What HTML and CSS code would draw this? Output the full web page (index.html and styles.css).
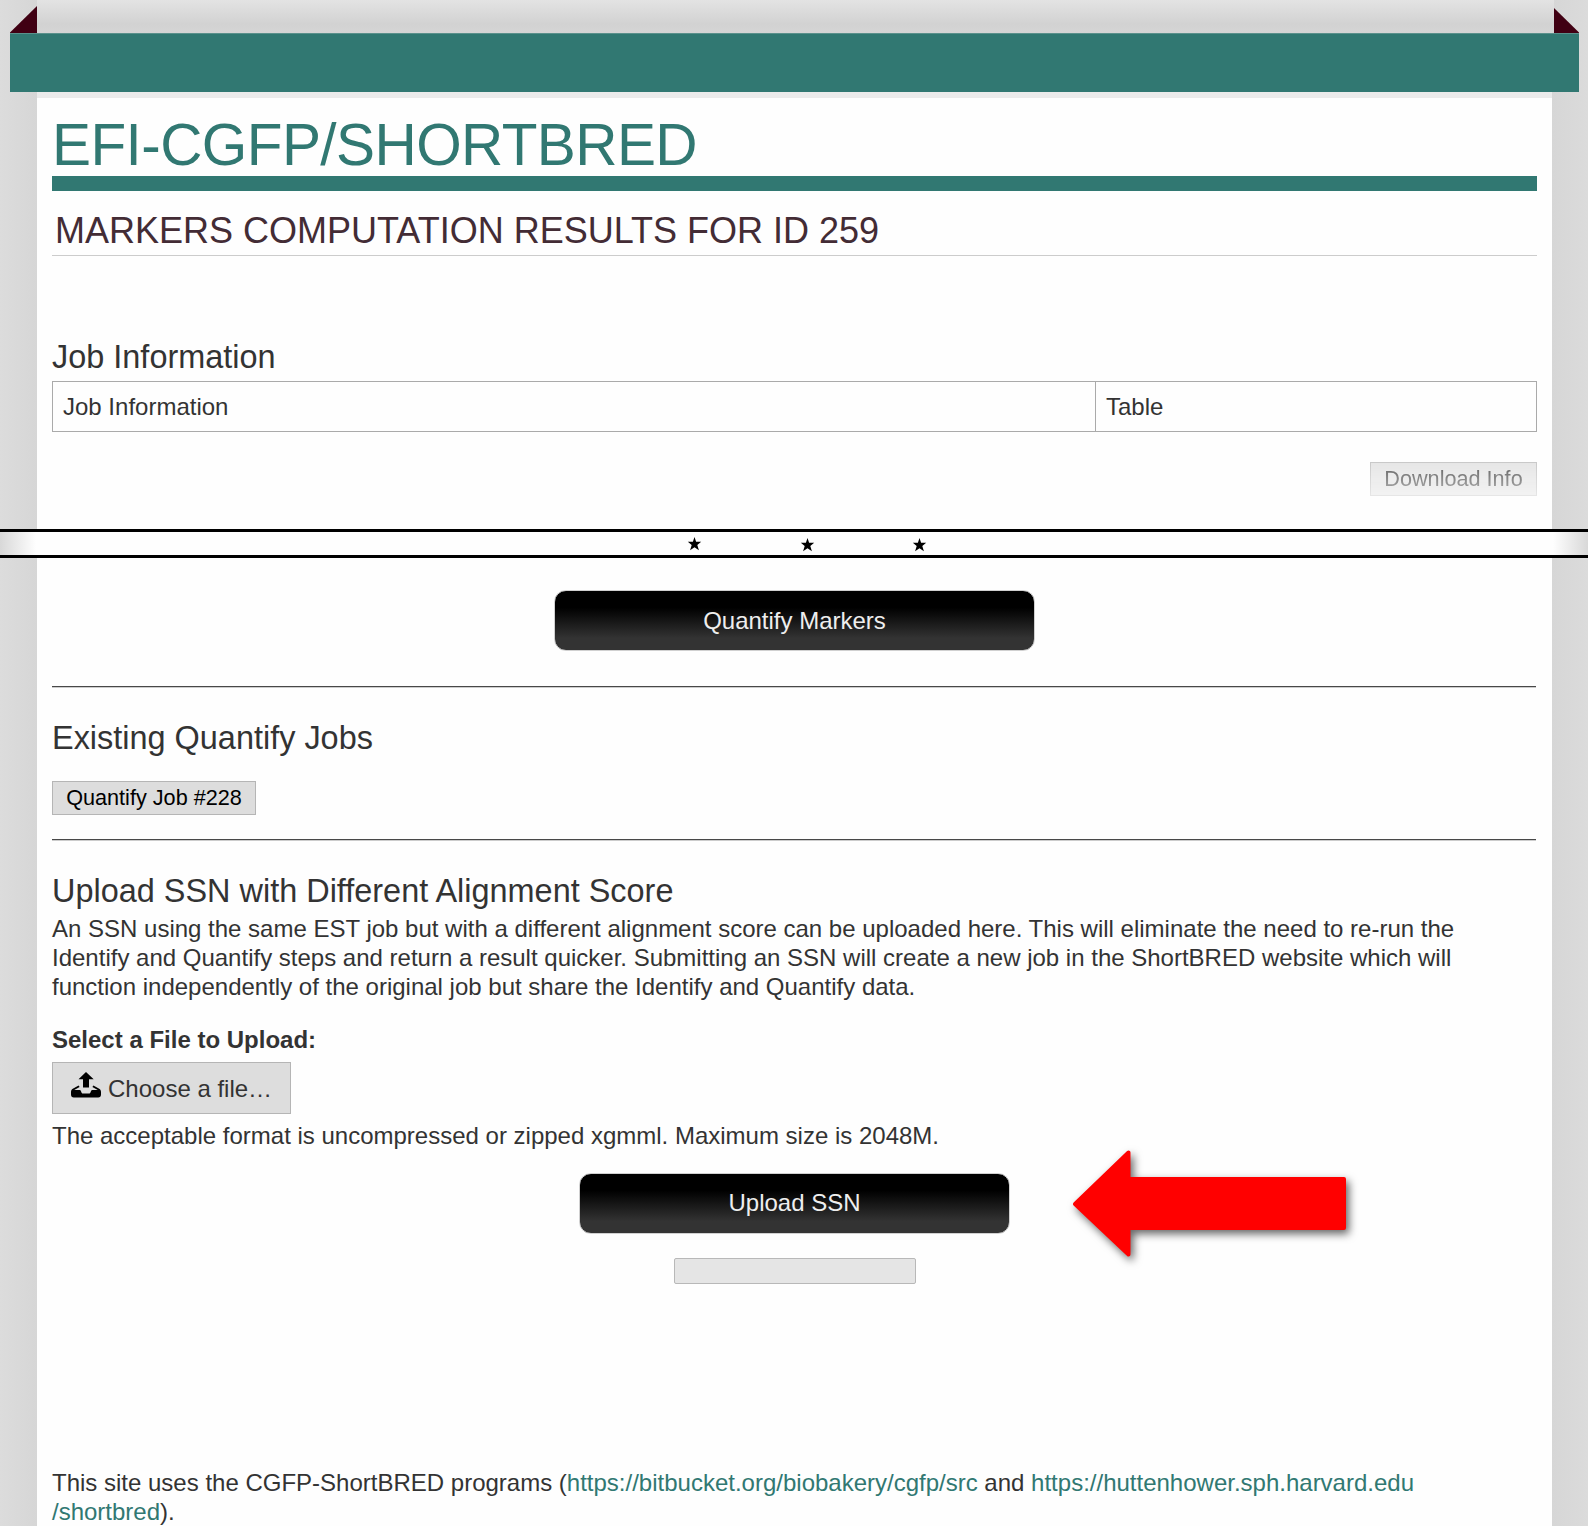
FILE: index.html
```html
<!DOCTYPE html>
<html lang="en">
<head>
<meta charset="utf-8">
<title>EFI-CGFP/ShortBRED</title>
<link rel="stylesheet" href="styles.css">
</head>
<body>
<div class="page">
  <header class="masthead">
    <div class="topstrip">
      <svg class="fold" width="27" height="27" viewBox="0 0 27 27"><path d="M27 0V27H0V26.500Z"/></svg>
      <div class="topshade"></div>
      <svg class="fold fold-right" width="25" height="25" viewBox="0 0 25 25"><path d="M0 0V25H25V24.500Z"/></svg>
    </div>
    <div class="band"></div>
    <div class="understrip"></div>
  </header>

  <section class="sheet sheet-job">
    <h1>EFI-CGFP/SHORTBRED</h1>
    <h2>MARKERS COMPUTATION RESULTS FOR ID 259</h2>
    <h3>Job Information</h3>
    <table class="info"><tbody><tr><td class="info-name">Job Information</td><td>Table</td></tr></tbody></table>
    <div class="download"><button class="mini faded" type="button">Download Info</button></div>
  </section>

  <div class="break">
    <svg class="stars" width="240" height="17" viewBox="0 0 240 17">
      <defs><path id="star" d="M0-7 1.6-2.200H6.700L2.800 1 4.400 6.200 0 3.300-4.400 6.200-2.800 1-6.700-2.200H-1.600Z"/></defs>
      <use href="#star" x="7.500" y="9"/><use href="#star" x="120.500" y="10"/><use href="#star" x="232.500" y="10"/>
    </svg>
  </div>

  <main class="sheet sheet-main">
    <button class="dark dark-wide" type="button">Quantify Markers</button>
    <hr>
    <h3>Existing Quantify Jobs</h3>
    <button class="mini" type="button">Quantify Job #228</button>
    <hr class="hr-second">
    <h3 class="h-upload">Upload SSN with Different Alignment Score</h3>
    <p>An SSN using the same EST job but with a different alignment score can be uploaded here. This will eliminate the need to re-run the<br>Identify and Quantify steps and return a result quicker. Submitting an SSN will create a new job in the ShortBRED website which will<br>function independently of the original job but share the Identify and Quantify data.</p>
    <p class="label">Select a File to Upload:</p>
    <label class="file">
      <svg width="30" height="26" viewBox="0 0 30 26"><path d="M15 0 22.7 7.2H18V15.5H12V7.2H7.5Z"/><path d="M7.6 13.6 8.6 15 3.2 18H8.7C10.6 18 9.8 21.6 12 21.6H18C20.2 21.6 19.4 18 21.3 18H26.8L21.4 15 22.4 13.6 28.2 16.8C29.3 17.5 30 18.6 30 20V22.5C30 24.5 29 25.4 27.2 25.4H2.8C1 25.4 0 24.5 0 22.5V20C0 18.6.7 17.5 1.8 16.8Z"/></svg>
      <span>Choose a file…</span>
    </label>
    <p class="format">The acceptable format is uncompressed or zipped xgmml. Maximum size is 2048M.</p>
    <div class="submit">
      <button class="dark dark-submit" type="button">Upload SSN</button>
      <svg class="arrow" width="290" height="125" viewBox="0 0 290 125"><path d="M6 57 59.500 5.500V32H275V81H59.500V107.500Z"/></svg>
    </div>
    <div class="progress"></div>
    <p class="credits">This site uses the CGFP-ShortBRED programs (<a>https://bitbucket.org/biobakery/cgfp/src</a> and <a>https://huttenhower.sph.harvard.edu<br>/shortbred</a>).</p>
  </main>
</div>
</body>
</html>
```
FILE: styles.css
```css
* { box-sizing: border-box; }
html, body { margin: 0; height: 1526px; overflow: hidden; }
body {
  font: 24px/29px "Liberation Sans", Arial, sans-serif;
  color: #333;
  background: #fff;
}
button { font-family: inherit; margin: 0; padding: 0; display: block; }
h1, h2, h3, p { margin: 0; font-weight: normal; white-space: nowrap; }

.page {
  width: 1588px;
  height: 1526px;
  overflow: hidden;
  background: linear-gradient(90deg, #dcdcdc, #d6d6d6 37px, #d6d6d6 1552px, #dbdbdb 1588px);
}

.topstrip { display: flex; align-items: flex-end; height: 33px; padding: 0 9px 0 10px; }
.fold { flex: none; display: block; fill: #400013; }
.topshade { flex: 1; height: 33px; background: linear-gradient(#e3e3e3, #d2d2d2 24px, #d5d5d5); }
.band { height: 59px; margin: 0 9px 0 10px; background: #317872; border-top: 1px solid #5a918c; }
.understrip { height: 6px; margin: 0 36px 0 37px; background: #ebebeb; }

.sheet { margin: 0 36px 0 37px; padding: 0 15px; background: #fefefe; }
.sheet-job { height: 431px; padding-top: 12px; }
h1 {
  height: 81px;
  font-size: 58.5px;
  line-height: 70px;
  letter-spacing: -0.58px;
  color: #317872;
  border-bottom: 15px solid #317872;
}
h2 {
  height: 65px;
  padding: 18px 0 0 3px;
  font-size: 36px;
  line-height: 43px;
  color: #432c35;
  border-bottom: 1px solid #ccc;
}
h3 { font-size: 32.45px; line-height: 40px; }
.sheet-job h3 { margin-top: 81px; }

.info { width: 1485px; height: 51px; margin-top: 4px; border-collapse: collapse; table-layout: fixed; }
.info td { padding: 0 10px; border: 1px solid #aaa; height: 50px; }
.info-name { width: 1043px; }

.download { display: flex; justify-content: flex-end; margin-top: 30px; }
.mini {
  width: 204px;
  height: 34px;
  font-size: 21.65px;
  line-height: 30px;
  color: #000;
  background: #ddd;
  border: 1px solid #b5b5b5;
}
.faded {
  width: 167px;
  color: #222;
  -webkit-mask-image: linear-gradient(rgba(0,0,0,.74), rgba(0,0,0,.32));
  mask-image: linear-gradient(rgba(0,0,0,.74), rgba(0,0,0,.32));
}

.break {
  display: flex;
  align-items: center;
  height: 29px;
  border: solid #000;
  border-width: 3px 0;
  background: linear-gradient(90deg, #d8d8d8, #fefefe 36px, #fefefe 1553px, #d8d8d8);
}
.stars { display: block; margin-left: 687px; fill: #000; }

.sheet-main { height: 968px; padding-top: 32px; }
.dark {
  width: 431px;
  height: 61px;
  margin: 0 auto;
  font-size: 24px;
  line-height: 58px;
  color: #eee;
  border: 1px solid #d0d0d0;
  border-radius: 12px;
  background: linear-gradient(#000 28%, #333 80%);
}
.dark-wide { width: 481px; }
.dark-submit { padding-bottom: 2px; }
hr { width: 1484px; height: 2px; margin: 35px 0 0; border: 0; background: linear-gradient(#484848 50%, #ccc 50%); }
hr + h3 { margin-top: 30px; }
h3 + .mini { margin-top: 23px; }
.hr-second { margin-top: 24px; }
.h-upload + p { margin-top: 3px; }
.label { margin-top: 24px; font-weight: bold; }
.file {
  display: flex;
  align-items: flex-start;
  gap: 7px;
  width: 239px;
  height: 52px;
  margin-top: 8px;
  padding: 9px 0 0 18px;
  background: #ddd;
  border: 1px solid #b5b5b5;
}
.file svg { flex: none; fill: #000; }
.file span { margin-top: 2px; }
.format { margin-top: 7px; }
.submit { position: relative; display: flex; margin-top: 23px; }
.arrow {
  position: absolute;
  left: 1017px;
  top: -26px;
  fill: #f00;
  stroke: #f00;
  stroke-width: 4px;
  stroke-linejoin: round;
  filter: drop-shadow(3px 4px 4px rgba(0,0,0,.6));
}
.progress {
  width: 242px;
  height: 26px;
  margin: 24px auto 0;
  background: #e5e5e5;
  border: 1px solid #b8b8b8;
  border-radius: 2px;
}
.credits { margin-top: 184px; }
.credits a { color: #317872; }
```
